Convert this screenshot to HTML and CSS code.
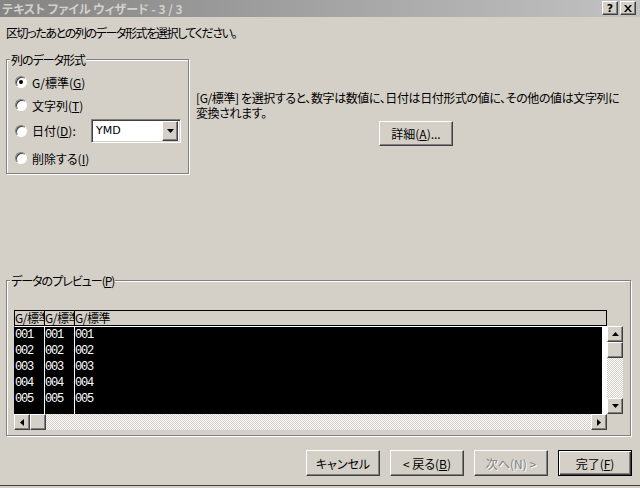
FILE: index.html
```html
<!DOCTYPE html>
<html lang="ja">
  <head>
    <meta charset="UTF-8" />
    <title>テキスト ファイル ウィザード - 3 / 3</title>
    <link rel="stylesheet" href="styles.css">
  </head>
  <body>
    <div class="window">
      <div class="titlebar">
        <span class="title">テキスト ファイル ウィザード - 3 / 3</span>
        <div class="title-buttons">
          <button class="title-btn help">?</button>
          <button class="title-btn">
            <svg width="8" height="7" viewBox="0 0 8 7"><path d="M0 0h2l2 2.5 2-2.5h2l-3 3.5 3 3.5h-2l-2-2.5-2 2.5h-2l3-3.5z" fill="#000"/></svg>
          </button>
        </div>
      </div>

      <div class="content">
        <p class="prompt">区切ったあとの列のデータ形式を選択してください。</p>

        <div class="top-row">
          <fieldset class="group format-group">
            <legend>列のデータ形式</legend>
            <label class="radio-row"><span class="radio checked"></span><span>G/標準(<u>G</u>)</span></label>
            <label class="radio-row"><span class="radio"></span><span>文字列(<u>T</u>)</span></label>
            <label class="radio-row date-row">
              <span class="radio"></span>
              <span class="date-label">日付(<u>D</u>):</span>
              <span class="combo">
                <span class="combo-value">YMD</span>
                <span class="combo-btn">
                  <svg width="7" height="4" viewBox="0 0 7 4"><path d="M0 0h7l-3.5 4z" fill="#000"/></svg>
                </span>
              </span>
            </label>
            <label class="radio-row"><span class="radio"></span><span>削除する(<u>I</u>)</span></label>
          </fieldset>

          <div class="description">
            <p>[G/標準] を選択すると、数字は数値に、日付は日付形式の値に、その他の値は文字列に<br>変換されます。</p>
            <button class="btn detail-btn">詳細(<u>A</u>)...</button>
          </div>
        </div>

        <fieldset class="group preview-group">
          <legend>データのプレビュー(<u>P</u>)</legend>
          <div class="preview">
            <div class="preview-main">
              <div class="grid">
                <div class="grid-head">
                  <span class="col">G/標準</span>
                  <span class="col">G/標準</span>
                  <span class="col wide">G/標準</span>
                </div>
                <div class="grid-body">
                  <div class="col">001<br>002<br>003<br>004<br>005</div>
                  <div class="col">001<br>002<br>003<br>004<br>005</div>
                  <div class="col wide">001<br>002<br>003<br>004<br>005</div>
                </div>
              </div>
              <div class="vscroll">
                <span class="scroll-btn">
                  <svg width="7" height="4" viewBox="0 0 7 4"><path d="M0 4h7l-3.5-4z" fill="#000"/></svg>
                </span>
                <span class="thumb"></span>
                <span class="track"></span>
                <span class="scroll-btn">
                  <svg width="7" height="4" viewBox="0 0 7 4"><path d="M0 0h7l-3.5 4z" fill="#000"/></svg>
                </span>
              </div>
            </div>
            <div class="hscroll">
              <span class="scroll-btn">
                <svg width="4" height="7" viewBox="0 0 4 7"><path d="M4 0v7l-4-3.5z" fill="#000"/></svg>
              </span>
              <span class="thumb"></span>
              <span class="track"></span>
              <span class="scroll-btn">
                <svg width="4" height="7" viewBox="0 0 4 7"><path d="M0 0v7l4-3.5z" fill="#000"/></svg>
              </span>
            </div>
          </div>
        </fieldset>

        <div class="actions">
          <button class="btn">キャンセル</button>
          <button class="btn">&lt; 戻る(<u>B</u>)</button>
          <button class="btn" disabled>次へ(N) &gt;</button>
          <button class="btn default">完了(<u>F</u>)</button>
        </div>
      </div>
    </div>
  </body>
</html>
```

FILE: styles.css
```css
* {
  box-sizing: border-box;
}
body {
  margin: 0;
  background: #d4d0c8;
  font-family: "Noto Sans CJK JP", "DejaVu Sans", sans-serif;
  font-size: 12px;
  font-feature-settings: "palt";
  color: #000;
}
.window {
  width: 640px;
  height: 486px;
  background: #d4d0c8;
  border-bottom: 1px solid #404040;
}

/* title bar */
.titlebar {
  height: 17px;
  display: flex;
  justify-content: space-between;
  padding: 0 4px 0 2px;
  background: linear-gradient(to right, #848484, #c2c2c2);
}
.title {
  color: #d4d0c8;
  font-weight: bold;
  line-height: 17px;
}
.title-buttons {
  display: flex;
  gap: 2px;
  padding-top: 1px;
}
.title-btn,
.btn,
.scroll-btn,
.thumb,
.combo-btn {
  background: #d4d0c8;
  border: 1px solid;
  border-color: #fff #404040 #404040 #fff;
  box-shadow: inset -1px -1px #808080;
}
.title-btn {
  width: 16px;
  height: 14px;
  padding: 0;
  display: flex;
  align-items: center;
  justify-content: center;
  font: bold 11px "DejaVu Sans", sans-serif;
  line-height: 1;
}

/* content */
.content {
  padding: 8px 0 0 6px;
}
.prompt {
  margin: 0;
  line-height: 16px;
  letter-spacing: -1.4px;
}
.top-row {
  display: flex;
  align-items: flex-start;
  margin-top: 10px;
}
.group {
  margin: 0;
  min-width: 0;
  border: 1px solid #808080;
  box-shadow: inset 1px 1px #fff, 1px 1px #fff;
}
.group legend {
  padding: 0 1px;
  line-height: 17px;
  letter-spacing: -1px;
  background: #d4d0c8;
}
.format-group {
  width: 183px;
  padding: 6px 0 7px 3px;
}
.radio-row {
  display: flex;
  align-items: center;
  gap: 5px;
  height: 16px;
  margin-left: 5px;
}
.radio-row + .radio-row {
  margin-top: 7px;
}
.date-row {
  height: 25px;
  margin-top: 5px !important;
  margin-bottom: 6px;
}
.radio {
  width: 12px;
  height: 12px;
  flex-shrink: 0;
  display: flex;
  align-items: center;
  justify-content: center;
  border-radius: 50%;
  background: #fff;
  border: 1px solid;
  border-color: #808080 #fff #fff #808080;
  box-shadow: inset 1px 1px #404040;
}
.radio.checked::after {
  content: "";
  width: 4px;
  height: 4px;
  border-radius: 50%;
  background: #000;
}
.date-label {
  width: 54px;
}
.combo {
  width: 90px;
  height: 24px;
  display: flex;
  align-items: center;
  justify-content: space-between;
  padding: 2px;
  background: #fff;
  border: 1px solid;
  border-color: #808080 #fff #fff #808080;
  box-shadow: inset 1px 1px #404040, inset -1px -1px #d4d0c8;
  font: 11px "DejaVu Sans", sans-serif;
}
.combo-value {
  padding-left: 2px;
}
.combo-btn {
  width: 16px;
  height: 20px;
  display: flex;
  align-items: center;
  justify-content: center;
}
.description {
  flex: 1;
  margin: 39px 0 0 7px;
  padding-right: 4px;
}
.description p {
  margin: 0;
  line-height: 15px;
  white-space: nowrap;
  letter-spacing: -0.4px;
}
.btn {
  width: 74px;
  height: 26px;
  padding: 0;
  font: inherit;
  color: #000;
}
.detail-btn {
  display: block;
  height: 25px;
  margin: 1px auto 0;
}

/* preview */
.preview-group {
  width: 625px;
  margin-top: 98px;
  padding: 21px 0 5px 3px;
}
.preview {
  margin-left: 4px;
}
.preview-main {
  display: flex;
}
.grid {
  width: 593px;
}
.grid-head,
.grid-body {
  display: flex;
}
.grid-head {
  height: 16px;
  border: 1px solid #000;
  line-height: 14px;
  letter-spacing: -0.5px;
}
.grid-head .col {
  width: 30px;
  border-right: 1px solid #000;
  overflow: hidden;
  white-space: nowrap;
}
.grid-body {
  height: 88px;
  background: #000;
  color: #fff;
  border-top: 1px solid #fff;
  border-left: 1px solid #000;
  border-right: 5px solid #fff;
  font: 12px "Liberation Mono", monospace;
  letter-spacing: -1.2px;
  line-height: 16px;
}
.grid-body .col {
  width: 30px;
  border-right: 1px solid #fff;
}
.grid .col.wide {
  flex: 1;
  border-right: none;
}
.vscroll {
  width: 16px;
  height: 88px;
  margin-top: 16px;
  display: flex;
  flex-direction: column;
}
.hscroll {
  width: 593px;
  height: 16px;
  display: flex;
}
.scroll-btn,
.thumb {
  width: 16px;
  height: 16px;
  flex-shrink: 0;
  display: flex;
  align-items: center;
  justify-content: center;
}
.track {
  flex: 1;
  background: repeating-conic-gradient(#fff 0 25%, #d4d0c8 0 50%) 0 0 / 2px 2px;
}

/* buttons */
.actions {
  display: flex;
  justify-content: flex-end;
  gap: 10px;
  margin-top: 14px;
  padding-right: 8px;
}
.btn:disabled {
  color: #808080;
  text-shadow: 1px 1px #fff;
}
.btn.default {
  border-color: #000;
  box-shadow: inset 1px 1px #fff, inset -1px -1px #404040, inset -2px -2px #808080;
}
```
